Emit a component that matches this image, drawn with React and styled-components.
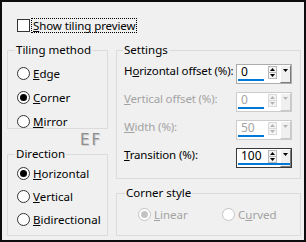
import React from "react";
import styled, { createGlobalStyle } from "styled-components";

const GlobalStyle = createGlobalStyle`
  body {
    margin: 0;
    background: #f0f0f0;
  }
`;

const Frame = styled.div`
  position: relative;
  width: 306px;
  height: 242px;
  box-sizing: border-box;
  border: 2px solid #0d0d0d;
  background: #f0f0f0;
  padding: 16px 3px 0 5px;
  font-family: "Noto Sans", "Open Sans", sans-serif;
  font-size: 11.5px;
  color: #000;
  white-space: nowrap;
`;

const CheckRow = styled.label`
  display: flex;
  align-items: center;
  height: 14px;
  margin-left: 10px;
`;

const CheckBox = styled.span`
  width: 13px;
  height: 13px;
  box-sizing: border-box;
  border: 1px solid #333;
  background: #fff;
`;

const FocusText = styled.span`
  margin-left: 2px;
  padding: 0 1px;
  line-height: 13px;
  letter-spacing: -0.1px;
  outline: 1px dotted #000;
`;

const Columns = styled.div`
  display: grid;
  grid-template-columns: 101px 185px;
  column-gap: 8px;
  margin-top: 10px;
`;

const Column = styled.div`
  display: flex;
  flex-direction: column;
`;

const Group = styled.fieldset`
  margin: ${({ $top }) => $top || 0}px 0 0 0;
  min-width: 0;
  border: 1px solid #dcdcdc;
  padding: ${({ $pad }) => $pad};
`;

const Legend = styled.legend`
  padding: 0 1px;
  margin-left: ${({ $offset }) => $offset}px;
  line-height: 16px;
  font-size: 11.5px;
`;

const RadioList = styled.div`
  display: flex;
  flex-direction: column;
  gap: ${({ $gap }) => $gap}px;
`;

const RadioRow = styled.label`
  display: flex;
  align-items: center;
  gap: 3px;
  height: 14px;
  color: ${({ $disabled }) => ($disabled ? "#a3a3a3" : "#000")};
`;

const RadioCircle = styled.span`
  display: flex;
  align-items: center;
  justify-content: center;
  width: 13px;
  height: 13px;
  box-sizing: border-box;
  border-radius: 50%;
  border: 1px solid ${({ $disabled }) => ($disabled ? "#c4c4c4" : "#333")};
  background: #fff;

  &::after {
    content: "";
    display: ${({ $checked }) => ($checked ? "block" : "none")};
    width: 7px;
    height: 7px;
    border-radius: 50%;
    background: ${({ $disabled }) => ($disabled ? "#c4c4c4" : "#000")};
  }
`;

const SettingList = styled.div`
  display: flex;
  flex-direction: column;
  gap: 8px;
`;

const SettingRow = styled.div`
  display: flex;
  justify-content: space-between;
  align-items: flex-start;
  height: 20px;
`;

const SettingLabel = styled.span`
  line-height: 14px;
  letter-spacing: -0.15px;
  color: ${({ $disabled }) => ($disabled ? "#a3a3a3" : "#000")};
`;

const Spin = styled.div`
  position: relative;
  flex: none;
  display: flex;
  align-items: flex-start;
  width: 56px;
  height: 20px;
  box-sizing: border-box;
  border: 1px solid
    ${({ $focused, $disabled }) =>
      $focused ? "#3a3a3a" : $disabled ? "#cccccc" : "#acacac"};
  background: #fff;

  &::after {
    content: "";
    position: absolute;
    left: 1px;
    bottom: 2px;
    height: 2px;
    width: ${({ $focused }) => ($focused ? "52px" : "26px")};
    background: #0078d7;
  }
`;

const SpinValue = styled.span`
  width: 30px;
  box-sizing: border-box;
  padding-left: 4px;
  line-height: 14px;
  font-size: 12px;
  color: ${({ $disabled }) => ($disabled ? "#a3a3a3" : "#000")};
`;

const Steppers = styled.div`
  display: flex;
  flex-direction: column;
  margin: 1px 0 0 1px;
`;

const StepButton = styled.span`
  display: flex;
  align-items: center;
  justify-content: center;
  width: 9px;
  height: 7px;
  box-sizing: border-box;
  border: 1px solid ${({ $disabled }) => ($disabled ? "#dadada" : "#b8b8b8")};
  background: #f4f4f4;
  & + & {
    margin-top: -1px;
  }
`;

const DropButton = styled.span`
  display: flex;
  justify-content: center;
  align-items: flex-start;
  width: 11px;
  height: 18px;
  margin-left: 3px;
  padding-top: 3px;
  box-sizing: border-box;
  background: #f0f0f0;
  border-top: 1px solid #fff;
  border-left: 1px solid #fff;
  border-right: 1px solid ${({ $disabled }) => ($disabled ? "#c8c8c8" : "#7a7a7a")};
  border-bottom: 1px solid ${({ $disabled }) => ($disabled ? "#c8c8c8" : "#7a7a7a")};
`;

const CornerRadios = styled.div`
  display: grid;
  grid-template-columns: 84px auto;
`;

const Watermark = styled.span`
  position: absolute;
  left: 78px;
  top: 129px;
  font-family: "DejaVu Sans", sans-serif;
  font-size: 15px;
  line-height: 18px;
  letter-spacing: 2px;
  color: #8e8e8e;
  text-shadow: 1px 1px 0 #d0d0d0;
`;

const Arrow = ({ up, color }) => (
  <svg width="5" height="3" viewBox="0 0 5 3">
    <polygon points={up ? "2.5,0 5,3 0,3" : "0,0 5,0 2.5,3"} fill={color} />
  </svg>
);

const Radio = ({ label, checked, disabled }) => (
  <RadioRow $disabled={disabled}>
    <RadioCircle $checked={checked} $disabled={disabled} />
    <span>{label}</span>
  </RadioRow>
);

const SpinBox = ({ value, disabled, focused }) => {
  const arrow = disabled ? "#b5b5b5" : "#000";
  return (
    <Spin $disabled={disabled} $focused={focused}>
      <SpinValue $disabled={disabled}>{value}</SpinValue>
      <Steppers>
        <StepButton $disabled={disabled}>
          <Arrow up color={arrow} />
        </StepButton>
        <StepButton $disabled={disabled}>
          <Arrow color={arrow} />
        </StepButton>
      </Steppers>
      <DropButton $disabled={disabled}>
        <Arrow color={arrow} />
      </DropButton>
    </Spin>
  );
};

const settings = [
  { label: <>H<u>o</u>rizontal offset (%):</>, value: "0" },
  { label: <><u>V</u>ertical offset (%):</>, value: "0", disabled: true },
  { label: <><u>W</u>idth (%):</>, value: "50", disabled: true },
  { label: <><u>T</u>ransition (%):</>, value: "100", focused: true },
];

export default function App() {
  return (
    <>
      <GlobalStyle />
      <Frame>
        <CheckRow>
          <CheckBox />
          <FocusText>
            <u>S</u>how tiling preview
          </FocusText>
        </CheckRow>

        <Columns>
          <Column>
            <Group $pad="8px 4px 0 9px">
              <Legend $offset={-2}>Tiling method</Legend>
              <RadioList $gap={10}>
                <Radio label={<><u>E</u>dge</>} />
                <Radio label={<><u>C</u>orner</>} checked />
                <Radio label={<><u>M</u>irror</>} />
              </RadioList>
            </Group>

            <Group $top={17} $pad="4px 4px 9px 9px">
              <Legend $offset={-2}>Direction</Legend>
              <RadioList $gap={9}>
                <Radio label={<><u>H</u>orizontal</>} checked />
                <Radio label={<><u>V</u>ertical</>} />
                <Radio label={<><u>B</u>idirectional</>} />
              </RadioList>
            </Group>
          </Column>

          <Column>
            <Group $pad="6px 8px 10px 7px">
              <Legend $offset={-1}>Settings</Legend>
              <SettingList>
                {settings.map((s, i) => (
                  <SettingRow key={i}>
                    <SettingLabel $disabled={s.disabled}>{s.label}</SettingLabel>
                    <SpinBox value={s.value} disabled={s.disabled} focused={s.focused} />
                  </SettingRow>
                ))}
              </SettingList>
            </Group>

            <Group $top={6} $pad="6px 4px 14px 21px">
              <Legend $offset={-13}>Corner style</Legend>
              <CornerRadios>
                <Radio label={<><u>L</u>inear</>} checked disabled />
                <Radio label={<>C<u>u</u>rved</>} disabled />
              </CornerRadios>
            </Group>
          </Column>
        </Columns>

        <Watermark>EF</Watermark>
      </Frame>
    </>
  );
}
